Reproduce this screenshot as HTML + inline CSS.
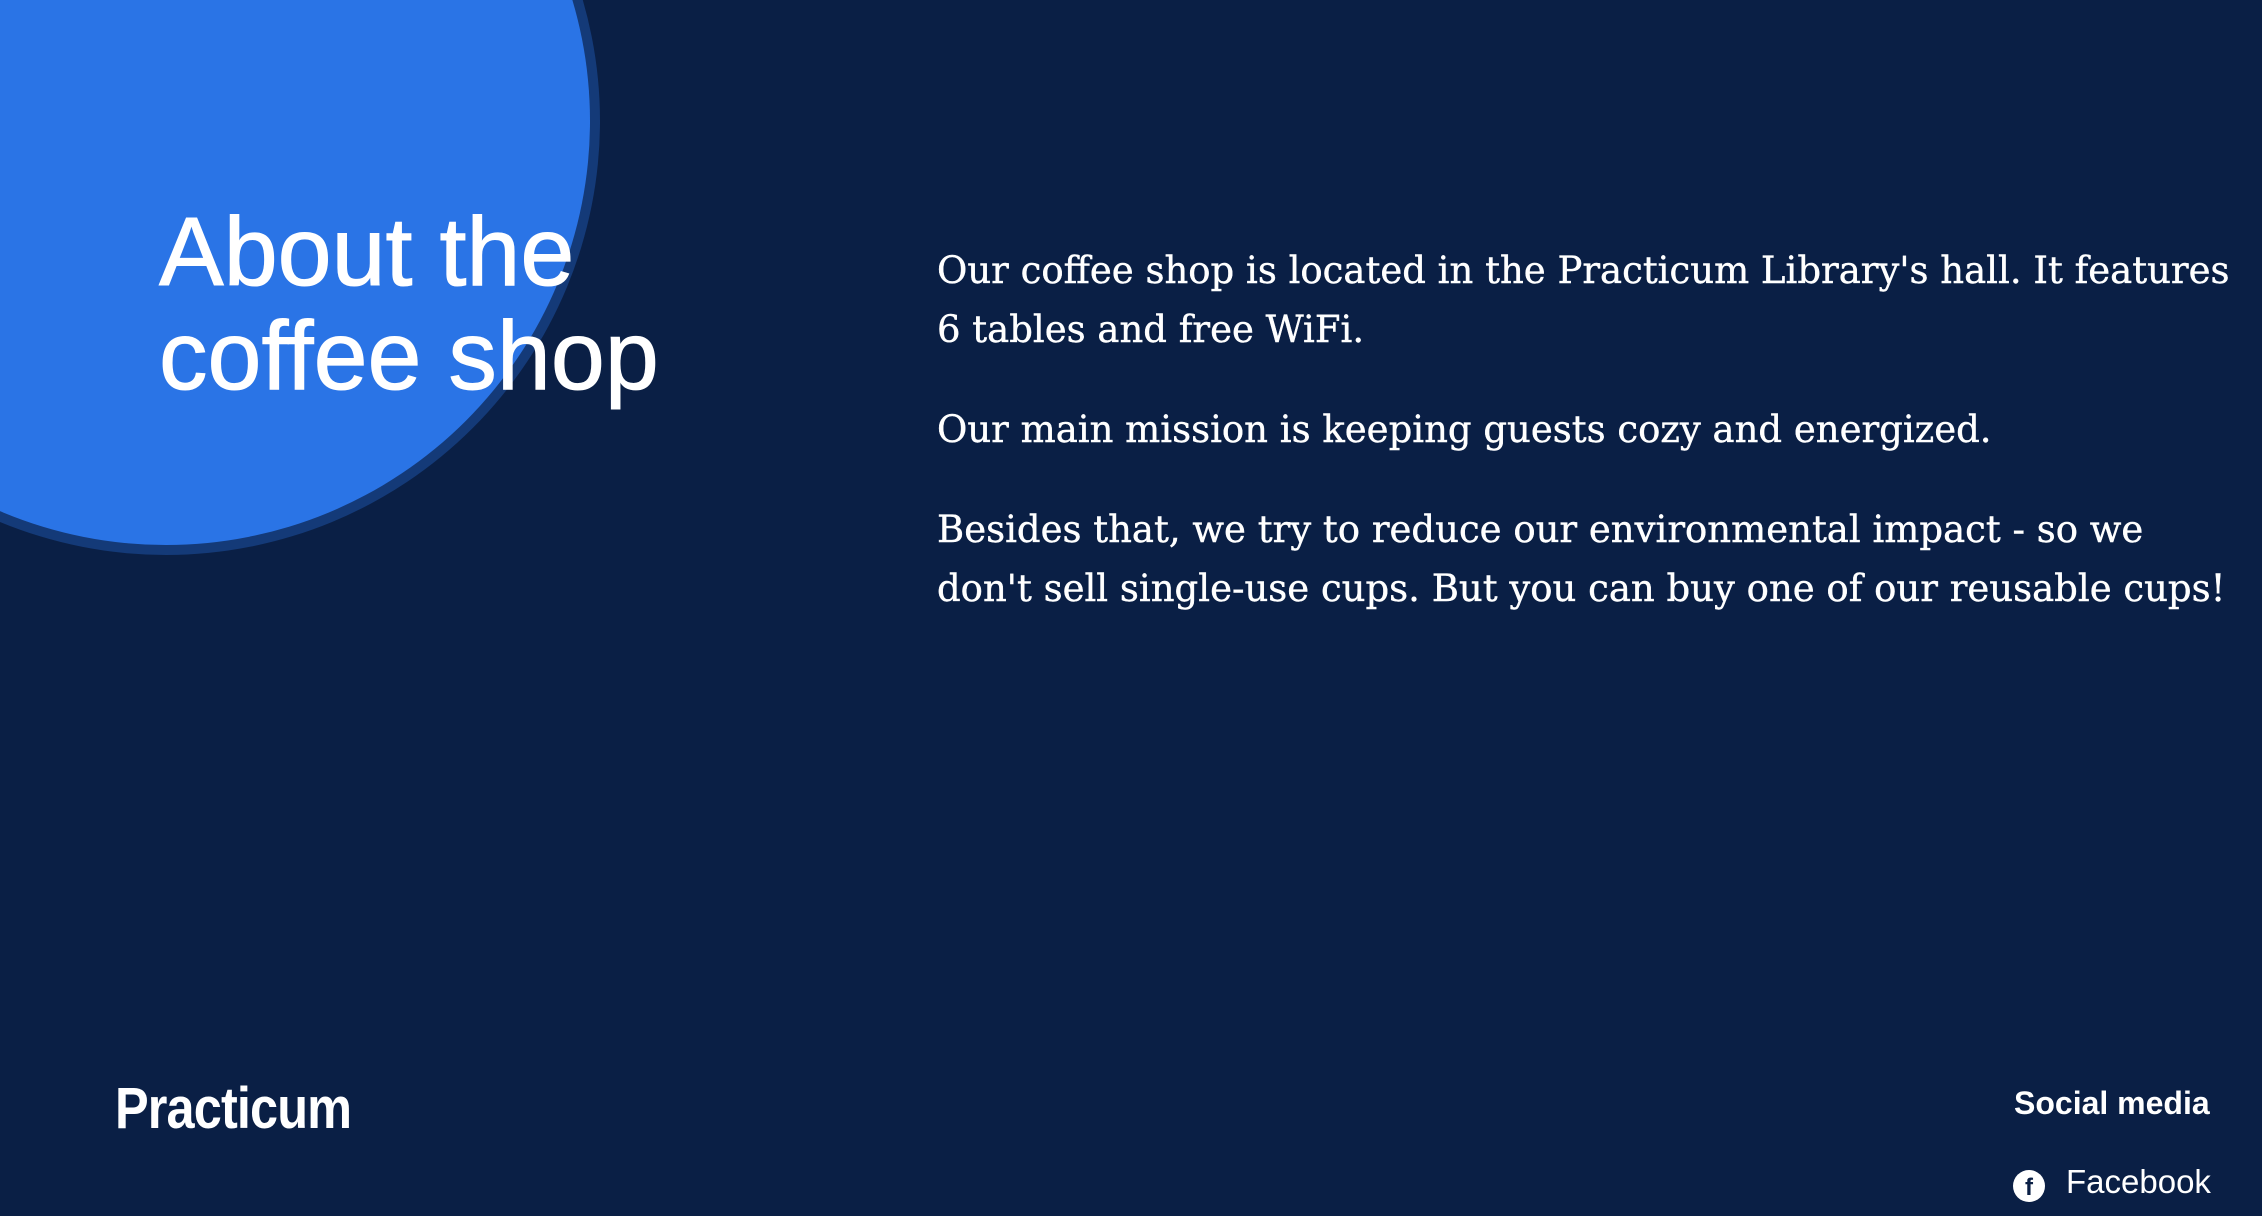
<!DOCTYPE html>
<html><head><meta charset="utf-8"><style>
html,body{margin:0;padding:0;}
body{width:2262px;height:1216px;background:#0a1f45;position:relative;overflow:hidden;font-family:"Liberation Sans",sans-serif;color:#fff;}
.ring{position:absolute;left:-268px;top:-313px;width:868px;height:868px;border-radius:50%;background:#143a78;}
.circ{position:absolute;left:-258px;top:-303px;width:848px;height:848px;border-radius:50%;background:#2a74e6;}
h1{position:absolute;left:159px;top:200px;margin:0;font-size:97px;font-weight:normal;line-height:104px;-webkit-text-stroke:1px #fff;}
.txt{position:absolute;left:937px;top:0;font-family:"DejaVu Serif",serif;font-size:37px;white-space:nowrap;-webkit-text-stroke:0.4px #fff;}
.txt div{position:absolute;left:0;}
.logo{position:absolute;left:115px;top:1075px;font-size:58px;font-weight:bold;transform:scaleX(0.87);transform-origin:left;letter-spacing:-1px;}
.sm{position:absolute;left:2014px;top:1085px;font-size:32px;font-weight:bold;}
.fb{position:absolute;left:2066px;top:1163px;font-size:33px;}
.ic{position:absolute;left:2013px;top:1170px;width:32px;height:32px;border-radius:50%;background:#fff;color:#0a1f45;font-weight:bold;font-size:24px;text-align:center;line-height:36px;}
</style></head><body>
<div class="ring"></div><div class="circ"></div>
<h1>About the<br>coffee shop</h1>
<div class="txt">
<div style="top:249px">Our coffee shop is located in the Practicum Library's hall. It features</div>
<div style="top:308px">6 tables and free WiFi.</div>
<div style="top:408px">Our main mission is keeping guests cozy and energized.</div>
<div style="top:508px">Besides that, we try to reduce our environmental impact - so we</div>
<div style="top:567px">don't sell single-use cups. But you can buy one of our reusable cups!</div>
</div>
<div class="logo">Practicum</div>
<div class="sm">Social media</div>
<div class="ic">f</div>
<div class="fb">Facebook</div>
</body></html>
